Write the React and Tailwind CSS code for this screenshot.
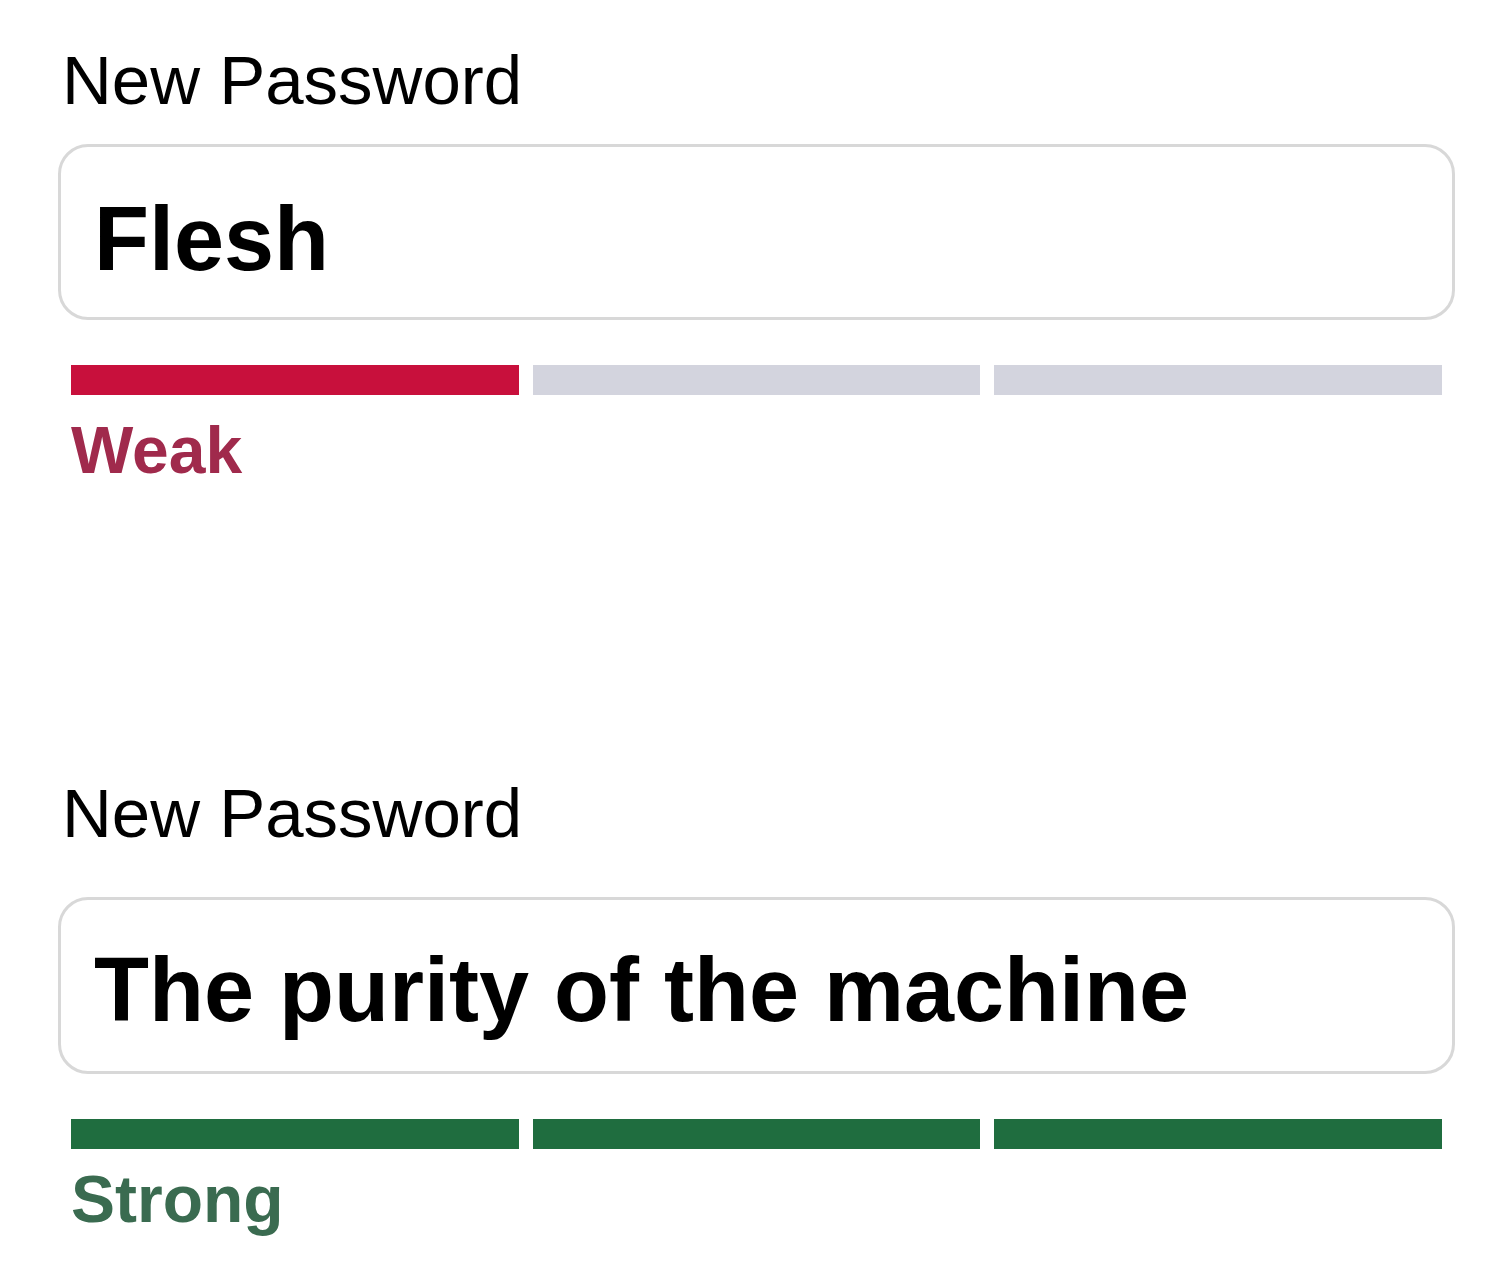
import React from "react";

const levels = {
    weak: { label: "Weak", filled: 1, bar: "bg-[#c8103c]", text: "text-[#a02a4c]" },
    strong: { label: "Strong", filled: 3, bar: "bg-[#1f6d3f]", text: "text-[#3a6b50]" }
};

const StrengthMeter = ({ level }) => {
    const cfg = levels[level];
    return (
        <div>
            <div className="mt-[45px] ml-[71px] w-[1371px] flex gap-[14px]">
                {[0, 1, 2].map(i => (
                    <div
                        key={i}
                        className={`flex-1 h-[30px] ${i < cfg.filled ? cfg.bar : "bg-[#d3d4de]"}`}
                    />
                ))}
            </div>
            <p className={`ml-[71px] text-[66px] leading-[76px] font-bold ${cfg.text} ${level === "weak" ? "mt-[17px]" : "mt-[12px]"}`}>
                {cfg.label}
            </p>
        </div>
    );
};

const PasswordField = ({ value, level, labelGap, boxHeight, textTop, className = "" }) => (
    <div className={className}>
        <label className="block ml-[62px] text-[69px] leading-[80px] text-black">New Password</label>
        <div
            className={`ml-[58px] w-[1397px] border-[3px] border-[#d8d8d8] rounded-[30px] bg-white pl-[33px] ${labelGap} ${boxHeight} ${textTop}`}
        >
            <span className="block text-[90px] leading-[88px] font-bold text-black">{value}</span>
        </div>
        <StrengthMeter level={level} />
    </div>
);

const App = () => {
    return (
        <div className="min-h-screen w-[1500px] bg-white pt-[41px] font-['Liberation_Sans',Arial,sans-serif]">
            <PasswordField
                value="Flesh"
                level="weak"
                labelGap="mt-[23px]"
                boxHeight="h-[176px]"
                textTop="pt-[48px]"
            />
            <PasswordField
                value="The purity of the machine"
                level="strong"
                labelGap="mt-[43px]"
                boxHeight="h-[177px]"
                textTop="pt-[46px]"
                className="mt-[286px]"
            />
        </div>
    );
};

export default App;
